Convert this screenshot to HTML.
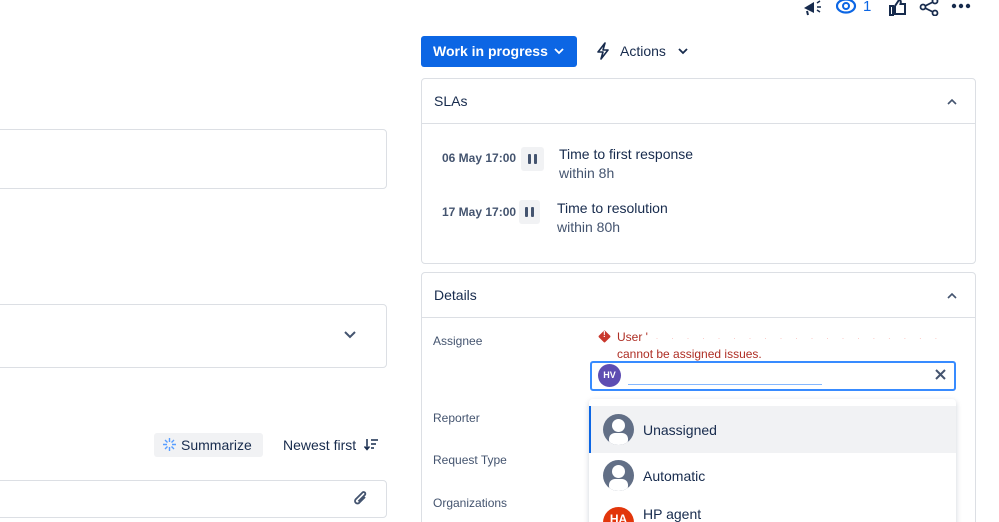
<!DOCTYPE html><html><head><meta charset="utf-8"><style>
*{box-sizing:border-box;margin:0;padding:0}
html,body{width:999px;height:522px;overflow:hidden}
body{background:#fff;font-family:"Liberation Sans",sans-serif;color:#172b4d;position:relative;font-size:14px}
.a{position:absolute}
.box{position:absolute;border:1px solid #dcdfe4;border-radius:4px}
.lbl{position:absolute;font-size:12px;color:#44546f}
.pz{position:absolute;background:#f1f2f4;border-radius:3px}
.pz i{position:absolute;top:7px;width:3px;height:10px;background:#44546f;border-radius:1px}
</style></head><body>
<svg class="a" style="left:802px;top:0" width="22" height="16" viewBox="0 0 22 16"><path d="M2 8 L12 2 L12 13 Z" fill="#172b4d"/><path d="M5 11 L6 15" stroke="#172b4d" stroke-width="2"/><path d="M15 3l3-2M15 7h4M15 10l3 2" stroke="#172b4d" stroke-width="1.5"/></svg>
<svg class="a" style="left:836px;top:0" width="22" height="14" viewBox="0 0 22 14"><ellipse cx="10" cy="6" rx="9" ry="6.5" fill="none" stroke="#0c66e4" stroke-width="2.2"/><circle cx="10" cy="6" r="3" fill="none" stroke="#0c66e4" stroke-width="2"/></svg>
<div class="a" style="left:863px;top:-2px;color:#0c66e4;font-size:15px">1</div>
<svg class="a" style="left:888px;top:0" width="20" height="16" viewBox="0 0 20 16"><path d="M2 6h3v9H2zM7 6l4-6c2 0 2 2 1.5 4H17v10H7z" fill="none" stroke="#172b4d" stroke-width="2"/></svg>
<svg class="a" style="left:919px;top:0" width="22" height="16" viewBox="0 0 22 16"><circle cx="4" cy="7" r="2.5" fill="none" stroke="#172b4d" stroke-width="1.8"/><circle cx="16" cy="1" r="2.5" fill="none" stroke="#172b4d" stroke-width="1.8"/><circle cx="16" cy="13" r="2.5" fill="none" stroke="#172b4d" stroke-width="1.8"/><path d="M6 6L14 2M6 8l8 4" stroke="#172b4d" stroke-width="1.8"/></svg>
<svg class="a" style="left:951px;top:3px" width="20" height="6"><circle cx="3" cy="3" r="2.2" fill="#172b4d"/><circle cx="10" cy="3" r="2.2" fill="#172b4d"/><circle cx="17" cy="3" r="2.2" fill="#172b4d"/></svg>
<div class="box" style="left:-10px;top:129px;width:397px;height:60px"></div>
<div class="box" style="left:-10px;top:304px;width:397px;height:64px"></div>
<svg class="a" style="left:344px;top:331px" width="12" height="8"><path d="M1 1l5 5 5-5" fill="none" stroke="#44546f" stroke-width="2"/></svg>
<div class="a" style="left:154px;top:433px;width:109px;height:24px;background:#f1f2f4;border-radius:3px"></div>
<svg class="a" style="left:163px;top:438px" width="13" height="13" viewBox="0 0 13 13"><path d="M6.5 0v4M6.5 9v4M0 6.5h4M9 6.5h4M2 2l2.5 2.5M8.5 8.5L11 11M11 2L8.5 4.5M4.5 8.5L2 11" stroke="#579dff" stroke-width="1.4"/></svg>
<div class="a" style="left:181px;top:437px;font-size:14px">Summarize</div>
<div class="a" style="left:283px;top:437px;font-size:14px">Newest first</div>
<svg class="a" style="left:364px;top:439px" width="14" height="12" viewBox="0 0 14 12"><path d="M3 0v10M0.5 7.5L3 10.5 5.5 7.5M7 1h7M7 5h5M7 9h3" stroke="#172b4d" stroke-width="1.5" fill="none"/></svg>
<div class="box" style="left:-10px;top:480px;width:397px;height:38px"></div>
<svg class="a" style="left:352px;top:490px" width="18" height="18" viewBox="0 0 18 18"><path d="M13 7l-6 6a2.5 2.5 0 0 1-3.5-3.5l7-7a1.7 1.7 0 0 1 2.4 2.4l-6.5 6.5" fill="none" stroke="#44546f" stroke-width="1.8"/></svg>
<div class="a" style="left:421px;top:36px;width:156px;height:31px;background:#0c66e4;border-radius:3px;color:#fff;font-weight:bold;font-size:14px;line-height:31px;padding-left:12px">Work in progress</div>
<svg class="a" style="left:554px;top:48px" width="10" height="7"><path d="M1 1l4 4 4-4" fill="none" stroke="#fff" stroke-width="1.8"/></svg>
<svg class="a" style="left:597px;top:42px" width="12" height="18" viewBox="0 0 12 18"><path d="M8 1L1 10h5l-2 7 7-9H6z" fill="none" stroke="#172b4d" stroke-width="1.6" stroke-linejoin="round"/></svg>
<div class="a" style="left:620px;top:43px;font-size:14px">Actions</div>
<svg class="a" style="left:678px;top:48px" width="10" height="7"><path d="M1 1l4 4 4-4" fill="none" stroke="#172b4d" stroke-width="1.8"/></svg>
<div class="box" style="left:421px;top:78px;width:555px;height:186px"></div>
<div class="a" style="left:422px;top:123px;width:553px;height:1px;background:#dcdfe4"></div>
<div class="a" style="left:434px;top:93px;font-size:14px">SLAs</div>
<svg class="a" style="left:947px;top:98px" width="10" height="7"><path d="M1 6l4-4 4 4" fill="none" stroke="#44546f" stroke-width="1.6"/></svg>
<div class="a" style="left:442px;top:151px;font-size:12px;font-weight:bold;color:#44546f">06 May 17:00</div>
<div class="pz" style="left:521px;top:147px;width:23px;height:24px"><i style="left:7px"></i><i style="left:13px"></i></div>
<div class="a" style="left:559px;top:145px;font-size:14px;line-height:19px">Time to first response<br><span style="color:#44546f">within 8h</span></div>
<div class="a" style="left:442px;top:205px;font-size:12px;font-weight:bold;color:#44546f">17 May 17:00</div>
<div class="pz" style="left:519px;top:200px;width:21px;height:24px"><i style="left:6px"></i><i style="left:12px"></i></div>
<div class="a" style="left:557px;top:199px;font-size:14px;line-height:19px">Time to resolution<br><span style="color:#44546f">within 80h</span></div>
<div class="box" style="left:421px;top:272px;width:555px;height:260px"></div>
<div class="a" style="left:422px;top:317px;width:553px;height:1px;background:#dcdfe4"></div>
<div class="a" style="left:434px;top:287px;font-size:14px">Details</div>
<svg class="a" style="left:947px;top:292px" width="10" height="7"><path d="M1 6l4-4 4 4" fill="none" stroke="#44546f" stroke-width="1.6"/></svg>
<div class="lbl" style="left:433px;top:334px">Assignee</div>
<div class="lbl" style="left:433px;top:411px">Reporter</div>
<div class="lbl" style="left:433px;top:453px">Request Type</div>
<div class="lbl" style="left:433px;top:496px">Organizations</div>
<div class="a" style="left:600px;top:332px;width:9px;height:9px;background:#c9372c;transform:rotate(45deg);border-radius:1px"></div>
<div class="a" style="left:603px;top:330px;color:#fff;font-size:8px;font-weight:bold">!</div>
<div class="a" style="left:617px;top:329px;font-size:12px;color:#ae2e24;line-height:16px">User '<span style="color:#fbc8c4;letter-spacing:5px;font-size:9px"> · · · · · · · · · · · · · · · · · · ·</span><br>cannot be assigned issues.</div>
<div class="a" style="left:590px;top:361px;width:366px;height:30px;border:2px solid #388bff;border-radius:3px"></div>
<div class="a" style="left:598px;top:364px;width:23px;height:23px;border-radius:50%;background:#5e4db2;color:#fff;font-size:9px;font-weight:bold;text-align:center;line-height:23px">HV</div>
<div class="a" style="left:628px;top:384px;width:194px;height:1px;background:#85b8ff"></div>
<svg class="a" style="left:935px;top:369px" width="11" height="11"><path d="M1 1l9 9M10 1l-9 9" stroke="#44546f" stroke-width="2"/></svg>
<div class="a" style="left:589px;top:399px;width:367px;height:130px;background:#fff;border-radius:4px;box-shadow:0 2px 6px rgba(9,30,66,.2)"></div>
<div class="a" style="left:589px;top:406px;width:367px;height:47px;background:#f1f2f4;border-left:2px solid #0c66e4"></div>
<div class="a" style="left:603px;top:414px;width:31px;height:31px;border-radius:50%;background:#626f86;overflow:hidden"><div class="a" style="left:9px;top:5px;width:13px;height:13px;border-radius:50%;background:#fff"></div><div class="a" style="left:6px;top:19px;width:19px;height:13px;border-radius:6px;background:#fff"></div></div>
<div class="a" style="left:643px;top:422px;font-size:14px">Unassigned</div>
<div class="a" style="left:603px;top:460px;width:31px;height:31px;border-radius:50%;background:#626f86;overflow:hidden"><div class="a" style="left:9px;top:5px;width:13px;height:13px;border-radius:50%;background:#fff"></div><div class="a" style="left:6px;top:19px;width:19px;height:13px;border-radius:6px;background:#fff"></div></div>
<div class="a" style="left:643px;top:468px;font-size:14px">Automatic</div>
<div class="a" style="left:603px;top:507px;width:31px;height:31px;border-radius:50%;background:#e2360b;color:#fff;font-size:12px;font-weight:bold;text-align:center;line-height:24px">HA</div>
<div class="a" style="left:643px;top:506px;font-size:14px">HP agent</div>
</body></html>
